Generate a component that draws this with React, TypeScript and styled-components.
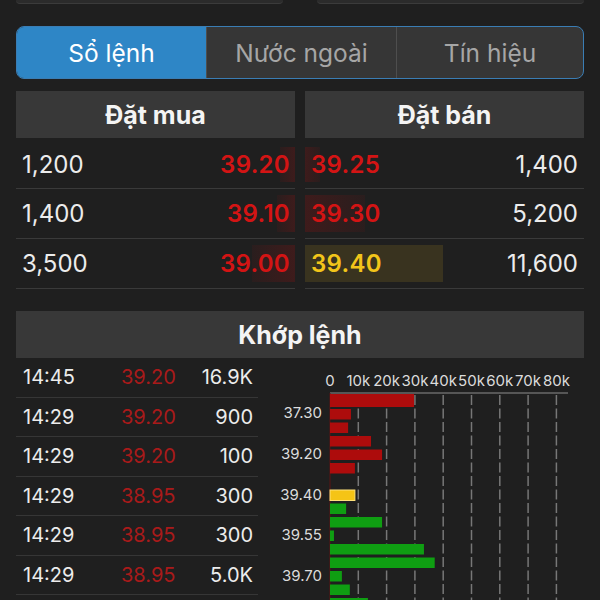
import React from 'react'
import styled, { createGlobalStyle } from 'styled-components'

const GlobalStyle = createGlobalStyle`
  html, body {
    margin: 0;
    padding: 0;
    background: #1f1f1f;
  }
  body {
    font-family: Inter, "Noto Sans", "Liberation Sans", sans-serif;
    color: #ececec;
  }
`

interface BookRow {
  qty: string
  price: string
  depth: number
  tone: 'red' | 'yellow'
}

const bids: BookRow[] = [
  { qty: '1,200', price: '39.20', depth: 15, tone: 'red' },
  { qty: '1,400', price: '39.10', depth: 18, tone: 'red' },
  { qty: '3,500', price: '39.00', depth: 43, tone: 'red' },
]

const asks: BookRow[] = [
  { qty: '1,400', price: '39.25', depth: 15, tone: 'red' },
  { qty: '5,200', price: '39.30', depth: 60, tone: 'red' },
  { qty: '11,600', price: '39.40', depth: 138, tone: 'yellow' },
]

const trades = [
  { time: '14:45', price: '39.20', vol: '16.9K' },
  { time: '14:29', price: '39.20', vol: '900' },
  { time: '14:29', price: '39.20', vol: '100' },
  { time: '14:29', price: '38.95', vol: '300' },
  { time: '14:29', price: '38.95', vol: '300' },
  { time: '14:29', price: '38.95', vol: '5.0K' },
]

// volume in thousands, per price step
const bars: { v: number; c: 'red' | 'yellow' | 'green' }[] = [
  { v: 29.7, c: 'red' },
  { v: 7.4, c: 'red' },
  { v: 6.4, c: 'red' },
  { v: 14.5, c: 'red' },
  { v: 18.4, c: 'red' },
  { v: 8.8, c: 'red' },
  { v: 0, c: 'red' },
  { v: 8.8, c: 'yellow' },
  { v: 5.7, c: 'green' },
  { v: 18.4, c: 'green' },
  { v: 1.4, c: 'green' },
  { v: 33.2, c: 'green' },
  { v: 37, c: 'green' },
  { v: 4.2, c: 'green' },
  { v: 7, c: 'green' },
  { v: 13.4, c: 'green' },
]

const priceLabels = ['37.30', '39.20', '39.40', '39.55', '39.70']

const barColors = { red: '#ad0c0c', yellow: '#f5c416', green: '#0f9e12' }

const VolumeChart: React.FC = () => {
  const x0 = 72
  const perK = 2.83
  const top = 35
  const pitch = 13.5
  const ticks = Array.from({ length: 9 }, (_, i) => i)
  return (
    <svg width="342" height="243" viewBox="0 0 342 243">
      {ticks.map((i) => (
        <text
          key={'t' + i}
          x={x0 + i * 28.3}
          y={28}
          fill="#dcdcdc"
          fontSize="15"
          textAnchor="middle"
          fontFamily="Inter, sans-serif"
        >
          {i === 0 ? '0' : `${i * 10}k`}
        </text>
      ))}
      <line x1={x0} y1={top} x2={310} y2={top} stroke="#6a6a6a" strokeWidth="1.5" />
      {ticks.slice(1).map((i) =>
        bars.map((_, r) => (
          <line
            key={`g${i}-${r}`}
            x1={x0 + i * 28.3}
            x2={x0 + i * 28.3}
            y1={top + 2 + r * pitch}
            y2={top + 12 + r * pitch}
            stroke="#777"
            strokeWidth="1.5"
          />
        ))
      )}
      <line x1={x0} y1={top} x2={x0} y2={243} stroke="#5a1414" strokeWidth="1" />
      {bars.map((b, r) => {
        const y = r === 0 ? top + 1 : top + 2.5 + r * pitch
        const h = r === 0 ? 13 : 10.5
        if (b.v <= 0) return null
        return (
          <rect
            key={'b' + r}
            x={x0}
            y={y}
            width={b.v * perK}
            height={h}
            fill={barColors[b.c]}
            stroke={b.c === 'yellow' ? '#ffe27a' : 'none'}
            strokeWidth="1"
          />
        )
      })}
      {priceLabels.map((p, i) => (
        <text
          key={p}
          x={64}
          y={60 + i * 40.8}
          fill="#dcdcdc"
          fontSize="15"
          textAnchor="end"
          fontFamily="Inter, sans-serif"
        >
          {p}
        </text>
      ))}
    </svg>
  )
}

const App: React.FC = () => {
  return (
    <>
      <GlobalStyle />
      <Page>
        <TopInputs>
          <InputStub />
          <InputStub />
        </TopInputs>

        <Segmented>
          <Tab active>Sổ lệnh</Tab>
          <Tab>Nước ngoài</Tab>
          <Tab>Tín hiệu</Tab>
        </Segmented>

        <Book>
          <Side>
            <Header>Đặt mua</Header>
            {bids.map((r) => (
              <Row key={r.price}>
                <Qty>{r.qty}</Qty>
                <Price tone={r.tone} side="bid">
                  <Depth tone={r.tone} side="bid" style={{ width: r.depth }} />
                  <span>{r.price}</span>
                </Price>
              </Row>
            ))}
          </Side>
          <Side>
            <Header>Đặt bán</Header>
            {asks.map((r) => (
              <Row key={r.price}>
                <Price tone={r.tone} side="ask">
                  <Depth tone={r.tone} side="ask" style={{ width: r.depth }} />
                  <span>{r.price}</span>
                </Price>
                <Qty>{r.qty}</Qty>
              </Row>
            ))}
          </Side>
        </Book>

        <Matches>
          <Header>Khớp lệnh</Header>
          <MatchBody>
            <TradeList>
              {trades.map((t, i) => (
                <TradeRow key={i}>
                  <TradeTime>{t.time}</TradeTime>
                  <TradePrice>{t.price}</TradePrice>
                  <TradeVol>{t.vol}</TradeVol>
                </TradeRow>
              ))}
            </TradeList>
            <ChartWrap>
              <VolumeChart />
            </ChartWrap>
          </MatchBody>
        </Matches>
      </Page>
    </>
  )
}
export default App

const Page = styled.div`
  width: 600px;
  height: 600px;
  overflow: hidden;
  box-sizing: border-box;
  padding: 0 16px;
  background: #1f1f1f;
`

const TopInputs = styled.div`
  display: flex;
  gap: 34px;
`

const InputStub = styled.div`
  flex: 1;
  height: 3px;
  background: #2b2b2b;
  border-bottom: 1px solid #3b3b3b;
  border-radius: 0 0 4px 4px;
`

const Segmented = styled.div`
  margin-top: 22px;
  height: 53px;
  box-sizing: border-box;
  border: 1.5px solid #3a7db4;
  border-radius: 8px;
  overflow: hidden;
  display: grid;
  grid-template-columns: 189px 190px 1fr;
  background: #363636;
`

const Tab = styled.div<{ active?: boolean }>`
  display: flex;
  align-items: center;
  justify-content: center;
  font-size: 24.5px;
  color: ${(p) => (p.active ? '#ffffff' : '#a6a6a6')};
  background: ${(p) => (p.active ? '#2e86c6' : 'transparent')};
  & + & {
    border-left: 1px solid #4e4e4e;
  }
`

const Book = styled.div`
  margin-top: 12px;
  display: grid;
  grid-template-columns: 1fr 1fr;
  gap: 10px;
`

const Side = styled.div`
  display: flex;
  flex-direction: column;
`

const Header = styled.div`
  height: 47px;
  flex: none;
  background: #383838;
  display: flex;
  align-items: center;
  justify-content: center;
  font-size: 25px;
  font-weight: 700;
  color: #f4f4f4;
`

const Row = styled.div`
  height: 49px;
  display: flex;
  align-items: center;
  justify-content: space-between;
  border-bottom: 1px solid #3a3a3a;
  font-size: 24px;
  &:nth-child(2) {
    height: 51px;
    padding-top: 3px;
    box-sizing: border-box;
  }
`

const Qty = styled.span`
  padding: 0 6px;
  color: #ececec;
`

const Price = styled.div<{ tone: 'red' | 'yellow'; side: 'bid' | 'ask' }>`
  position: relative;
  align-self: stretch;
  display: flex;
  align-items: center;
  flex: 1;
  justify-content: ${(p) => (p.side === 'bid' ? 'flex-end' : 'flex-start')};
  padding: ${(p) => (p.side === 'bid' ? '0 5px 0 0' : '0 0 0 6px')};
  color: ${(p) => (p.tone === 'yellow' ? '#f2c51a' : '#d31414')};
  font-weight: 600;
  letter-spacing: 0.3px;
  span {
    position: relative;
  }
`

const Depth = styled.div<{ tone: 'red' | 'yellow'; side: 'bid' | 'ask' }>`
  position: absolute;
  top: 6px;
  bottom: 6px;
  ${(p) => (p.side === 'bid' ? 'right: 0;' : 'left: 0;')}
  background: ${(p) =>
    p.tone === 'yellow'
      ? '#39331f'
      : p.side === 'bid'
      ? 'linear-gradient(to left, rgba(120,20,20,0.35), rgba(120,20,20,0.12))'
      : 'linear-gradient(to right, rgba(120,20,20,0.35), rgba(120,20,20,0.12))'};
`

const Matches = styled.div`
  margin-top: 22px;
`

const MatchBody = styled.div`
  display: flex;
`

const TradeList = styled.div`
  width: 242px;
  flex: none;
`

const TradeRow = styled.div`
  height: 38.5px;
  display: grid;
  grid-template-columns: 98px 70px 1fr;
  align-items: center;
  padding: 0 5px 0 7px;
  border-bottom: 1px solid #363636;
  font-size: 20px;
`

const TradeTime = styled.span`
  color: #ececec;
`

const TradePrice = styled.span`
  color: #a91a1a;
`

const TradeVol = styled.span`
  color: #ececec;
  text-align: right;
`

const ChartWrap = styled.div`
  flex: 1;
  display: flex;
`
